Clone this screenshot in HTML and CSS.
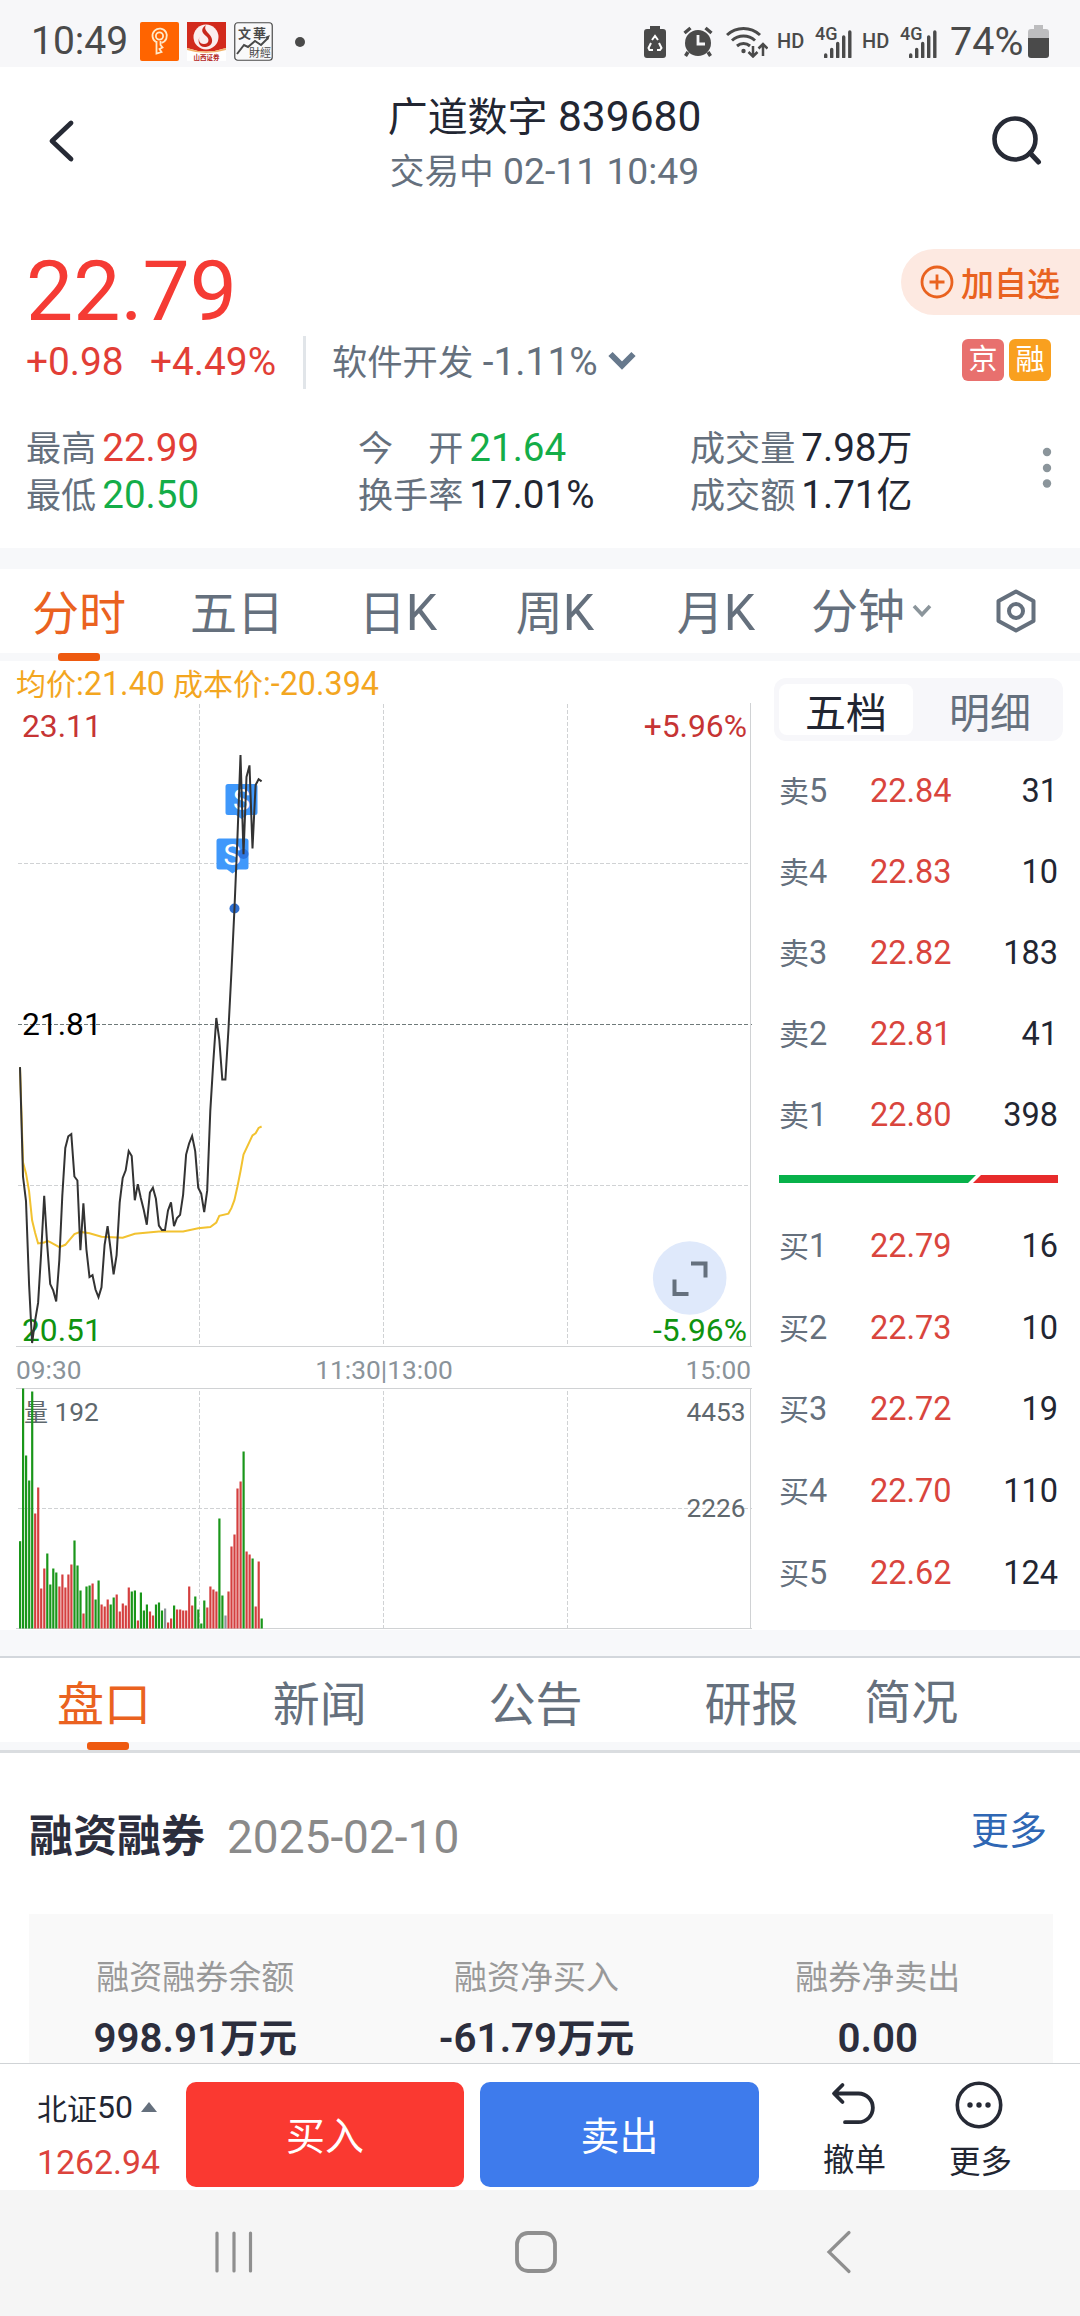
FILE: index.html
```
<!DOCTYPE html>
<html lang="zh-CN">
<head>
  <meta charset="UTF-8" />
  <meta name="viewport" content="width=device-width, initial-scale=1.0" />
  <title>广道数字 839680</title>
  <link rel="stylesheet" href="styles.css">
</head>
<body>
  <div class="status-bar">
    <span class="clock">10:49</span>
    <svg class="app-icon" width="39" height="39" viewBox="0 0 39 39">
      <rect width="39" height="39" rx="2" fill="#ff6400"/>
      <g fill="none" stroke="#ffe9c9" stroke-width="1.800">
        <path d="M16 20a7.200 7.200 0 1 1 5.500.8"/>
        <circle cx="19.500" cy="14" r="3.600"/>
        <path d="M16.500 19v12.500l5-1.500-2-3 3-1.500-2-2.500v-4"/>
      </g>
    </svg>
    <svg class="app-icon" width="39" height="39" viewBox="0 0 39 39">
      <rect width="39" height="39" fill="#fff"/>
      <path d="M0 0H39V26Q19 33 0 26z" fill="#d22a1c"/>
      <path d="M0 26Q19 33 39 26V28Q19 34 0 28z" fill="#f3b26a"/>
      <circle cx="19" cy="15" r="12.500" fill="#fbeeee"/>
      <path d="M19 3c-6 4-4 8 0 11s3 8-2 8-6-5-4-8c-3 5-1 12 6 11s8-8 3-13-4-7-3-9z" fill="#c9281c"/>
      <text x="6.500" y="37.500" class="app-name app-name-red">山西证券</text>
    </svg>
    <svg class="app-icon" width="39" height="39" viewBox="0 0 39 39">
      <rect x=".75" y=".75" width="37.500" height="37.500" rx="3" fill="#f9f9fa" stroke="#4a4a4a" stroke-width="1.200"/>
      <text x="4" y="16" class="app-name app-name-top">文</text>
      <text x="19" y="16" class="app-name app-name-top">華</text>
      <text x="15" y="34.500" class="app-name app-name-low">財經</text>
      <path d="M3 32l7-9 4 2 7-6 6 4 7-7" fill="none" stroke="#4a4a4a" stroke-width="2"/>
      <path d="M31 15l5-2-2 5z" fill="#4a4a4a"/>
    </svg>
    <span class="dot"></span>

    <div class="status-right">
      <svg width="22" height="33" viewBox="0 0 22 33">
        <path d="M6 1h10v3h3a3 3 0 0 1 3 3v23a3 3 0 0 1-3 3H3a3 3 0 0 1-3-3V7a3 3 0 0 1 3-3h3z" fill="#4a4a4a"/>
        <path d="M8 15l3-4 3 4M15 18l2.500 5-1.500 2h-3M9 25H5.500L4.500 23l2.500-5" fill="none" stroke="#fff" stroke-width="2"/>
      </svg>
      <svg class="s-alarm" width="30" height="31" viewBox="0 0 30 31">
        <circle cx="15" cy="17" r="13" fill="#4a4a4a"/>
        <path d="M1.500 7l6-5M28.500 7l-6-5M5 26l-2.500 4M25 26l2.500 4" stroke="#4a4a4a" stroke-width="3.400"/>
        <path d="M15 9v9h7" fill="none" stroke="#f7f7f9" stroke-width="2.800"/>
      </svg>
      <svg class="s-wifi" width="42" height="33" viewBox="0 0 42 33">
        <g fill="none" stroke="#4a4a4a" stroke-width="3">
          <path d="M1 10a24 24 0 0 1 33 0M6 15.500a17 17 0 0 1 23 0M11 21a10 10 0 0 1 13 0"/>
          <path d="M27 21v10M22.500 27l4.500 4.500 4.500-4.500M37 31V19M32.500 23.500L37 19l4.500 4.500" stroke-width="2.500"/>
        </g>
        <circle cx="17.500" cy="26" r="2.200" fill="#4a4a4a"/>
      </svg>
      <span class="hd">HD</span>
      <span class="net">4G</span>
      <svg class="s-bars" width="28" height="28" viewBox="0 0 28 28">
        <path d="M1.700 25v2M7.700 19.500V27M13.700 13.500V27M19.700 7V27M25.800 2V27" stroke="#4a4a4a" stroke-width="3.400" stroke-linecap="round"/>
      </svg>
      <span class="hd">HD</span>
      <span class="net">4G</span>
      <svg class="s-bars" width="28" height="28" viewBox="0 0 28 28">
        <path d="M1.700 25v2M7.700 19.500V27M13.700 13.500V27M19.700 7V27M25.800 2V27" stroke="#4a4a4a" stroke-width="3.400" stroke-linecap="round"/>
      </svg>
      <span class="percent">74%</span>
      <svg class="s-battery" width="21" height="33" viewBox="0 0 21 33">
        <path d="M6 0h9v4h3a3 3 0 0 1 3 3v6H0V7a3 3 0 0 1 3-3h3z" fill="#bdbdbf"/>
        <path d="M0 13h21v17a3 3 0 0 1-3 3H3a3 3 0 0 1-3-3z" fill="#4a4a4a"/>
      </svg>
    </div>
  </div>

  <header class="header">
    <svg class="back" width="30" height="46" viewBox="0 0 30 46">
      <path d="M24 5L5 23l19 18" fill="none" stroke="#262a35" stroke-width="4.800" stroke-linecap="round" stroke-linejoin="round"/>
    </svg>
    <div class="title">
      <h1><span class="cn">广道数字</span> 839680</h1>
      <p><span class="cn">交易中</span> 02-11 10:49</p>
    </div>
    <svg class="search" width="52" height="52" viewBox="0 0 52 52">
      <circle cx="25" cy="25" r="20.500" fill="none" stroke="#262a35" stroke-width="4.600"/>
      <path d="M40 39l8.500 9" stroke="#262a35" stroke-width="5" stroke-linecap="round"/>
    </svg>
  </header>

  <section class="quote">
    <div class="price-row">
      <span class="price">22.79</span>
      <button class="add-btn">
        <svg width="34" height="34" viewBox="0 0 34 34">
          <g fill="none" stroke="#e9621f" stroke-width="2.800">
            <circle cx="17" cy="17" r="15"/>
            <path d="M17 9.500v15M9.500 17h15"/>
          </g>
        </svg>
        加自选
      </button>
    </div>
    <div class="change-row">
      <span class="up change">+0.98</span>
      <span class="up change-pct">+4.49%</span>
      <span class="divider"></span>
      <span class="sector"><span class="cn">软件开发</span> -1.11%</span>
      <svg class="sector-arrow" width="28" height="19" viewBox="0 0 28 19">
        <path d="M2.500 3L14 14.500 25.500 3" fill="none" stroke="#66788c" stroke-width="6"/>
      </svg>
      <span class="badge badge-red">京</span>
      <span class="badge badge-orange">融</span>
    </div>
    <div class="stats">
      <div class="stat"><span class="cn">最高</span><b class="up">22.99</b></div>
      <div class="stat"><span class="cn">今　开</span><b class="down">21.64</b></div>
      <div class="stat"><span class="cn">成交量</span><b>7.98<i>万</i></b></div>
      <div class="stat"><span class="cn">最低</span><b class="down">20.50</b></div>
      <div class="stat"><span class="cn">换手率</span><b>17.01%</b></div>
      <div class="stat"><span class="cn">成交额</span><b>1.71<i>亿</i></b></div>
      <svg class="more-dots" width="10" height="42" viewBox="0 0 10 42">
        <g fill="#8b959b"><circle cx="5" cy="5" r="4.200"/><circle cx="5" cy="21" r="4.200"/><circle cx="5" cy="36.500" r="4.200"/></g>
      </svg>
    </div>
  </section>

  <nav class="period-tabs">
    <a class="active">分时</a>
    <a>五日</a>
    <a>日<em>K</em></a>
    <a>周<em>K</em></a>
    <a>月<em>K</em></a>
    <a class="minute">分钟
      <svg width="20" height="14" viewBox="0 0 20 14"><path d="M2 2l8 8.500L18 2" fill="none" stroke="#8b959b" stroke-width="3.600"/></svg>
    </a>
    <a class="settings">
      <svg width="42" height="44" viewBox="0 0 42 44">
        <g fill="none" stroke="#65707d" stroke-width="4" stroke-linejoin="round">
          <path d="M21 2.500L38.500 12v20L21 41.500 3.500 32V12z"/>
          <circle cx="21" cy="22" r="7"/>
        </g>
      </svg>
    </a>
  </nav>

  <main class="market">
    <svg id="chart" class="chart" width="764" height="969" viewBox="0 0 764 969">
      <text class="legend" x="16" y="34"><tspan class="legend-cn">均价</tspan>:21.40 <tspan class="legend-cn">成本价</tspan>:-20.394</text>

      <!-- price grid -->
      <g class="grid">
        <path d="M199.500 43V685M383.500 43V685M567.500 43V685M18 202.500H750M18 524.500H750"/>
        <path d="M199.500 730V967M383.500 730V967M567.500 730V967M18 847.500H752"/>
      </g>
      <path class="grid-mid" d="M18 363.500H752"/>
      <path class="frame" d="M750.500 42V685.500M16 685.500H752M16 727.500H752M750.500 727.500V967.500M16 967.500H752"/>

      <text class="lbl" x="22" y="76" fill="#c63434">23.11</text>
      <text class="lbl end" x="747" y="76" fill="#c63434">+5.96%</text>
      <text class="lbl" x="22" y="374" fill="#000">21.81</text>
      <text class="lbl" x="22" y="680" fill="#0f930f">20.51</text>
      <text class="lbl end" x="747" y="680" fill="#0f930f">-5.96%</text>

      <!-- sell marks -->
      <path d="M228 123h27q2.500 0 2.500 2.500v26q0 2.500-2.500 2.500h-8l-5.500 4-5.500-4h-8q-2.500 0-2.500-2.500v-26q0-2.500 2.500-2.500z" fill="#3f98fb"/>
      <path d="M219 177.500h27q2.500 0 2.500 2.500v26q0 2.500-2.500 2.500h-8l-5.500 4-5.500-4h-8q-2.500 0-2.500-2.500v-26q0-2.500 2.500-2.500z" fill="#3f98fb"/>
      <text class="mark" x="241.500" y="149">S</text>
      <text class="mark" x="232" y="203.500">S</text>
      <circle cx="243.500" cy="193" r="5" fill="#2c75df"/>
      <circle cx="234.500" cy="247.500" r="5" fill="#2f6fd0"/>

      <polyline id="avgLine" fill="none" stroke="#f2c230" stroke-width="2"/>
      <polyline id="priceLine" fill="none" stroke="#333" stroke-width="2"/>

      <circle cx="689.700" cy="617" r="36.800" fill="#dfe9fb"/>
      <path d="M691 602.500h14.500v14M674.500 618.500v14.500h14" fill="none" stroke="#65707d" stroke-width="4"/>

      <text class="axis" x="16" y="718">09:30</text>
      <text class="axis mid" x="384" y="718">11:30|13:00</text>
      <text class="axis end" x="751" y="718">15:00</text>

      <text class="vol" x="24" y="760"><tspan class="vol-cn">量</tspan> 192</text>
      <text class="vol end" x="745.500" y="760">4453</text>
      <text class="vol end" x="745.500" y="856">2226</text>
      <g id="volume"></g>
    </svg>

    <aside class="book">
      <div class="book-tabs">
        <span class="active">五档</span>
        <span>明细</span>
      </div>
      <ul class="sells">
        <li><span><i>卖</i>5</span><b>22.84</b><em>31</em></li>
        <li><span><i>卖</i>4</span><b>22.83</b><em>10</em></li>
        <li><span><i>卖</i>3</span><b>22.82</b><em>183</em></li>
        <li><span><i>卖</i>2</span><b>22.81</b><em>41</em></li>
        <li><span><i>卖</i>1</span><b>22.80</b><em>398</em></li>
      </ul>
      <svg class="ratio" width="279" height="8" viewBox="0 0 279 8">
        <path d="M0 0H197L189 8H0z" fill="#07b14a"/>
        <path d="M202 0H279V8H194z" fill="#e72b2b"/>
      </svg>
      <ul class="buys">
        <li><span><i>买</i>1</span><b>22.79</b><em>16</em></li>
        <li><span><i>买</i>2</span><b>22.73</b><em>10</em></li>
        <li><span><i>买</i>3</span><b>22.72</b><em>19</em></li>
        <li><span><i>买</i>4</span><b>22.70</b><em>110</em></li>
        <li><span><i>买</i>5</span><b>22.62</b><em>124</em></li>
      </ul>
    </aside>
  </main>

  <nav class="info-tabs">
    <a class="active">盘口</a>
    <a>新闻</a>
    <a>公告</a>
    <a>研报</a>
    <a class="profile">简况</a>
  </nav>

  <section class="margin-info">
    <div class="margin-head">
      <h2>融资融券</h2>
      <time>2025-02-10</time>
      <a>更多</a>
    </div>
    <div class="margin-grid">
      <div><span>融资融券余额</span><b>998.91<i>万元</i></b></div>
      <div><span>融资净买入</span><b>-61.79<i>万元</i></b></div>
      <div><span>融券净卖出</span><b>0.00</b></div>
    </div>
  </section>

  <footer class="trade-bar">
    <div class="index">
      <div class="index-name">北证<em>50</em><span class="tri"></span></div>
      <div class="index-value">1262.94</div>
    </div>
    <button class="buy">买入</button>
    <button class="sell">卖出</button>
    <div class="action cancel">
      <svg width="48" height="48" viewBox="0 0 48 48">
        <path d="M13.500 4L5 12.500l8.500 8.500M6 12.500h23.500a14.300 14.300 0 0 1 0 28.700H16" fill="none" stroke="#262a35" stroke-width="3.800" stroke-linecap="round" stroke-linejoin="round"/>
      </svg>
      <span>撤单</span>
    </div>
    <div class="action more">
      <svg width="48" height="48" viewBox="0 0 48 48">
        <circle cx="24" cy="24" r="21.700" fill="none" stroke="#262a35" stroke-width="3.600"/>
        <g fill="#262a35"><circle cx="15" cy="24" r="2.700"/><circle cx="24" cy="24" r="2.700"/><circle cx="33" cy="24" r="2.700"/></g>
      </svg>
      <span>更多</span>
    </div>
  </footer>

  <div class="nav-bar">
    <svg class="recents" width="40" height="44" viewBox="0 0 40 44">
      <path d="M3 3v38M20 3v38M36.500 3v38" stroke="#8f8f8f" stroke-width="3.200" stroke-linecap="round"/>
    </svg>
    <svg class="home" width="44" height="44" viewBox="0 0 44 44">
      <rect x="3" y="3" width="38" height="38" rx="11" fill="none" stroke="#8f8f8f" stroke-width="3.800"/>
    </svg>
    <svg class="nav-back" width="30" height="44" viewBox="0 0 30 44">
      <path d="M24 2.500L4 22l20 19.500" fill="none" stroke="#8f8f8f" stroke-width="3.200" stroke-linecap="round"/>
    </svg>
  </div>

  <script>
    const X0 = 20, STEP = 3.02, VOL_BASE = 967.5;

    // one value per minute, y is in 1/2.24 px from the top of the chart
    const price = [
      912, 1157, 1212, 1400, 1530, 1480, 1440, 1330, 1200, 1310, 1398, 1412, 1437, 1345, 1200, 1093,
      1067, 1062, 1157, 1166, 1322, 1217, 1320, 1382, 1378, 1410, 1427, 1405, 1310, 1268, 1320, 1376,
      1333, 1215, 1160, 1143, 1100, 1111, 1210, 1174, 1205, 1232, 1265, 1193, 1182, 1207, 1267, 1277,
      1277, 1233, 1215, 1268, 1250, 1243, 1198, 1108, 1083, 1066, 1100, 1182, 1195, 1237, 1188, 1010,
      900, 802, 850, 940, 940, 830, 700, 560, 400, 213, 435, 262, 236, 422, 280, 267, 272
    ];
    // [minute, y]
    const avg = [
      [0, 912], [1, 1125], [2, 1150], [3, 1190], [4, 1255], [5, 1283], [6, 1307], [8, 1305], [9, 1301],
      [10, 1304], [13, 1315], [15, 1310], [18, 1286], [20, 1281], [23, 1284], [27, 1292], [34, 1294],
      [38, 1285], [46, 1280], [54, 1280], [59, 1273], [63, 1270], [65, 1260], [66, 1245], [69, 1240],
      [70, 1228], [71, 1210], [72, 1180], [73, 1145], [74, 1108], [77, 1065], [78, 1060], [79, 1048], [80, 1045]
    ];
    // bar heights in px
    const volume = [
      87.3, 240, 173, 148, 237, 115, 141, 40, 60, 75, 44, 60, 56, 42, 54, 41, 54, 64, 88, 63, 38, 15,
      42, 43, 45, 29, 48, 24, 22, 29, 24, 31, 34, 17, 25, 23, 41, 37, 38, 8, 36, 18, 24, 17, 13, 24,
      26, 18, 20, 6, 10, 23, 19, 19, 18, 18, 42, 23, 32, 19, 5, 28, 21, 42, 39, 37, 110, 33, 13, 37,
      82, 94, 140, 147, 177, 77, 74, 70, 22, 67, 10
    ];
    const side = 'gggggrrrrggggrrrrrgggrggrggrrrggrrrrrggrgggrrgggxrrgrrrrrrggggrrrrggxrrrrrgrrgrrg';
    const colors = { g: '#1a961a', r: '#d43f3f', x: '#8c9499' };

    const toY = v => (v / 2.24 - 1).toFixed(1);
    document.getElementById('priceLine').setAttribute('points',
      price.map((v, i) => (X0 + i * STEP).toFixed(1) + ',' + toY(v)).join(' '));
    document.getElementById('avgLine').setAttribute('points',
      avg.map(([i, v]) => (X0 + i * STEP).toFixed(1) + ',' + toY(v)).join(' '));

    const group = document.getElementById('volume');
    volume.forEach((h, i) => {
      const bar = document.createElementNS('http://www.w3.org/2000/svg', 'rect');
      bar.setAttribute('x', (X0 - 1 + i * STEP).toFixed(1));
      bar.setAttribute('y', VOL_BASE - h);
      bar.setAttribute('width', 2.2);
      bar.setAttribute('height', h);
      bar.setAttribute('fill', colors[side[i]]);
      group.appendChild(bar);
    });
  </script>
</body>
</html>
```

FILE: styles.css
```
* {
  box-sizing: border-box;
}
body {
  margin: 0;
  width: 1080px;
  height: 2316px;
  overflow: hidden;
  background: #fff;
  color: #222632;
  font-family: Roboto, "Noto Sans CJK SC", sans-serif;
}
h1, h2, p, ul {
  margin: 0;
  padding: 0;
  font-weight: 400;
}
svg {
  display: block;
  flex: none;
}
button {
  border: 0;
  padding: 0;
  font-family: inherit;
}
i, em {
  font-style: normal;
}
.cn {
  font-size: .91em;
}
.up { color: #e23e36; }
.down { color: #14ad48; }

/* status bar */
.status-bar {
  display: flex;
  height: 67px;
  padding: 0 31px;
  background: #f7f7f9;
  color: #4a4a4a;
}
.clock {
  width: 109px;
  font-size: 39px;
  line-height: 83px;
}
.app-icon {
  margin: 22px 8px 0 0;
}
.app-name {
  font-family: "Noto Sans CJK SC", sans-serif;
  font-weight: 700;
  fill: #4a4a4a;
}
.app-name-red { font-size: 6.5px; fill: #b3261e; }
.app-name-top { font-size: 13px; }
.app-name-low { font-size: 11px; font-weight: 400; }
.dot {
  width: 10px;
  height: 10px;
  margin: 37px 0 0 14px;
  border-radius: 50%;
  background: #4a4a4a;
}
.status-right {
  display: flex;
  margin-left: auto;
  padding-top: 25px;
}
.s-alarm { margin: 1px 0 0 17px; }
.s-wifi { margin: 0 0 0 13px; }
.hd {
  width: 28px;
  margin-left: 9px;
  font-size: 20px;
  font-weight: 500;
  line-height: 33px;
}
.net {
  width: 22px;
  margin-left: 10px;
  font-size: 18px;
  font-weight: 500;
  line-height: 17px;
}
.s-bars { margin: 5px 1px 0 -13px; }
.percent {
  width: 78px;
  margin-left: 12px;
  font-size: 39.5px;
  line-height: 34px;
}

/* header */
.header {
  display: grid;
  grid-template-columns: 119px 1fr 110px;
  height: 163px;
  padding-top: 22px;
}
.back { margin: 29px 0 0 47px; }
.title { text-align: center; }
.title h1 {
  font-size: 42.5px;
  line-height: 55px;
}
.title h1 .cn { font-size: .94em; }
.title p {
  color: #65707d;
  font-size: 37.3px;
  line-height: 52px;
}
.title p .cn { font-size: .93em; }
.search { margin: 25px 0 0 20px; }

/* quote */
.quote {
  height: 318px;
  padding: 16px 0 0 26px;
}
.price-row {
  display: flex;
  justify-content: space-between;
  height: 90px;
}
.price {
  color: #f53b34;
  font-size: 84px;
  line-height: 92px;
}
.add-btn {
  display: flex;
  align-items: center;
  gap: 7px;
  width: 179px;
  height: 66px;
  margin-top: 3px;
  padding-left: 19px;
  border-radius: 33px 0 0 33px;
  background: #fde9e1;
  color: #e9621f;
  font-size: 33px;
  font-weight: 500;
  white-space: nowrap;
}
.change-row {
  display: flex;
  align-items: center;
  height: 52px;
  padding-right: 29px;
  font-size: 38.8px;
  line-height: 52px;
}
.change { width: 124px; }
.change-pct { width: 153px; }
.divider {
  width: 3px;
  height: 53px;
  margin-right: 26px;
  background: #e1e5e9;
}
.sector {
  color: #65707d;
  white-space: nowrap;
}
.sector-arrow { margin: -4px auto 0 10px; }
.badge {
  width: 42px;
  height: 42px;
  margin: -4px 0 0 5px;
  border-radius: 6px;
  color: #fff;
  font-size: 29px;
  line-height: 42px;
  text-align: center;
}
.badge-red { background: #e8706e; }
.badge-orange { background: #f9a01f; }
.stats {
  position: relative;
  display: grid;
  grid-template-columns: 332px 332px 332px;
  grid-auto-rows: 47px;
  margin-top: 36px;
  font-size: 38.6px;
  line-height: 47px;
}
.stat .cn { color: #65707d; }
.stat b {
  margin-left: 6px;
  font-weight: 400;
}
.stat i { font-size: .93em; }
.more-dots {
  position: absolute;
  top: 23px;
  right: 28px;
}

/* period tabs */
.period-tabs {
  display: grid;
  grid-template-columns: 158px 158px 164px 150px 172px 138px 1fr;
  grid-template-rows: 84px;
  height: 113px;
  border-top: 21px solid #f7f8fa;
  border-bottom: 8px solid #f7f8fa;
  color: #65707d;
  font-size: 47px;
  line-height: 89px;
}
.period-tabs a {
  position: relative;
  height: 84px;
  text-align: center;
}
.period-tabs em { font-size: 50px; }
.period-tabs .active,
.info-tabs .active {
  color: #ea6220;
}
.active::after {
  position: absolute;
  bottom: -8px;
  left: 58px;
  width: 42px;
  height: 8px;
  border-radius: 3px;
  background: #ee5a10;
}
.period-tabs .active::after,
.info-tabs .active::after {
  content: "";
}
.period-tabs .minute {
  display: flex;
  align-items: center;
  gap: 7px;
  padding-left: 9px;
  white-space: nowrap;
}
.settings svg { margin: 20px 0 0 55px; }

/* chart + order book */
.market {
  display: flex;
  height: 969px;
}
.legend {
  fill: #f3a61f;
  font-size: 32.3px;
}
.legend-cn { font-size: 30px; }
.grid path {
  fill: none;
  stroke: #d0d2d4;
  stroke-dasharray: 4 2;
}
.grid-mid {
  stroke: #6f7a7a;
  stroke-dasharray: 4 2;
}
.frame {
  fill: none;
  stroke: #d0d2d4;
}
.lbl { font-size: 31.8px; }
.end { text-anchor: end; }
.mid { text-anchor: middle; }
.mark {
  fill: #fff;
  font-size: 29px;
  text-anchor: middle;
}
.axis {
  fill: #8a939a;
  font-size: 26.3px;
}
.vol {
  fill: #5f686e;
  font-size: 26.3px;
}
.vol-cn { font-size: 24px; }
.book {
  width: 316px;
  padding: 17px 17px 0 10px;
}
.book-tabs {
  display: flex;
  height: 63px;
  padding: 6px 5px;
  border-radius: 12px;
  background: #f7f7fa;
  color: #65707d;
  font-size: 41px;
  line-height: 61px;
  text-align: center;
}
.book-tabs span {
  flex: 1;
  height: 51px;
  padding-left: 9px;
}
.book-tabs .active {
  flex: 0 0 134px;
  padding-left: 0;
  border-radius: 8px;
  background: #fff;
  color: #222632;
}
.book ul {
  padding: 0 5px 0 5px;
  list-style: none;
}
.book li {
  display: flex;
  height: 81px;
  font-size: 32.5px;
  line-height: 81px;
}
.book .sells { margin-top: 10px; }
.book li span {
  width: 91px;
  color: #65707d;
}
.book li i { font-size: 30px; }
.book li b {
  color: #d9453d;
  font-weight: 400;
}
.book li em { margin-left: auto; }
.ratio { margin: 19px 0 22px 5px; }
.book .buys li {
  height: 81.7px;
  line-height: 83px;
}

/* info tabs */
.info-tabs {
  display: flex;
  height: 123px;
  padding-left: 57px;
  border-top: 26px solid #f7f8fa;
  border-bottom: 3px solid #dadde0;
  background: linear-gradient(#d3d7dc 2px, #fff 2px, #fff 86px, #f7f8fa 86px);
  color: #65707d;
  font-size: 47px;
  line-height: 94px;
}
.info-tabs a {
  width: 216px;
  height: 94px;
  padding-top: 2px;
}
.info-tabs .active { position: relative; }
.info-tabs .active::after {
  bottom: 0;
  left: 30px;
}
.info-tabs .profile {
  margin-left: -56px;
  padding-top: 0;
}

/* margin trading */
.margin-info {
  height: 310px;
  padding: 57px 27px 0 29px;
  overflow: hidden;
}
.margin-head {
  display: flex;
  height: 104px;
  line-height: 55px;
}
.margin-head h2 {
  color: #2c2e3d;
  font-size: 44px;
  font-weight: 700;
}
.margin-head time {
  margin-left: 22px;
  color: #8a8a8a;
  font-size: 46px;
}
.margin-head a {
  margin: -6px 6px 0 auto;
  color: #2f67b4;
  font-size: 38px;
}
.margin-grid {
  display: grid;
  grid-template-columns: repeat(3, 1fr);
  height: 150px;
  padding-top: 35px;
  background: #f9f9f9;
  text-align: center;
}
.margin-grid div { margin-left: -9px; }
.margin-grid span {
  display: block;
  color: #999;
  font-size: 33px;
  line-height: 57px;
}
.margin-grid b {
  display: block;
  color: #2c2e3d;
  font-size: 40.3px;
  font-weight: 600;
  line-height: 65px;
}
.margin-grid i { font-size: 38.5px; }

/* trade bar */
.trade-bar {
  display: flex;
  height: 127px;
  border-top: 1px solid #d0d3d6;
  background: #fff;
}
.index {
  width: 186px;
  padding: 21px 0 0 37px;
}
.index-name {
  display: flex;
  align-items: center;
  height: 44px;
  font-size: 30px;
}
.index-name em { font-size: 32px; }
.tri {
  margin: 0 0 0 8px;
  border: 8px solid transparent;
  border-top: 0;
  border-bottom: 10px solid #65707d;
}
.index-value {
  margin-top: 12px;
  color: #dc433c;
  font-size: 33.8px;
  line-height: 44px;
}
.buy, .sell {
  width: 278px;
  height: 105px;
  margin-top: 18px;
  padding-bottom: 3px;
  border-radius: 10px;
  color: #fff;
  font-size: 39px;
}
.buy { background: #fa3931; }
.sell {
  width: 279px;
  margin-left: 16px;
  background: #3e7bec;
}
.action {
  width: 62px;
  font-size: 31.5px;
  line-height: 40px;
  white-space: nowrap;
}
.cancel { margin: 17px 0 0 64px; }
.cancel svg { margin: 0 0 12px 6px; }
.more { margin: 17px 0 0 64px; }
.more svg { margin: 0 0 14px 6px; }

/* system navigation */
.nav-bar {
  display: flex;
  height: 126px;
  padding: 40px 0 0 214px;
  background: #f5f5f5;
}
.home { margin-left: 260px; }
.nav-back { margin-left: 267px; }
```
